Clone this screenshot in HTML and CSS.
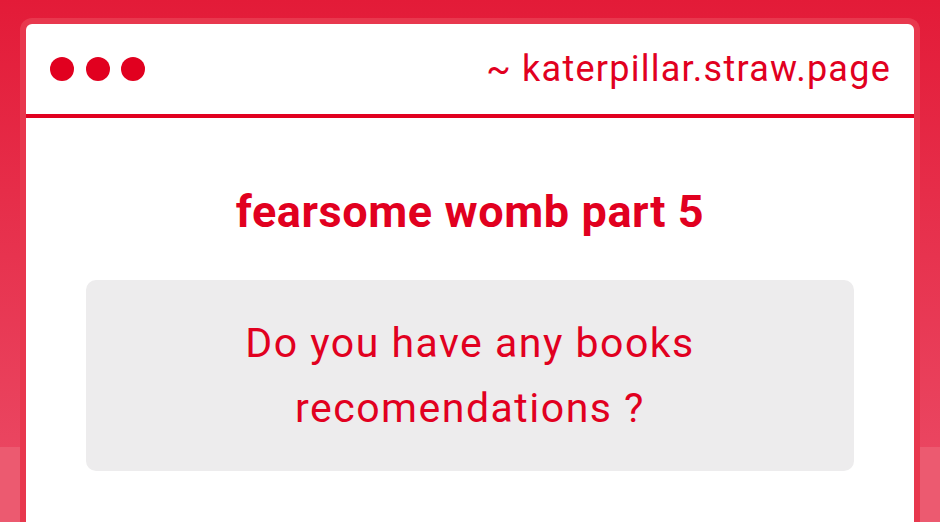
FILE: index.html
```html
<!DOCTYPE html>
<html lang="en">
<head>
  <meta charset="UTF-8">
  <meta name="viewport" content="width=device-width,initial-scale=1.0">
  <title>katerpillar.straw.page</title>
  <link rel="stylesheet" href="styles.css">
</head>
<body>
  <div class="window">
    <!-- title bar -->
    <header class="bar">
      <div class="dots">
        <span class="dot"></span>
        <span class="dot"></span>
        <span class="dot"></span>
      </div>
      <div class="url">~ katerpillar.straw.page</div>
    </header>

    <main class="content">
      <h1 class="asker">fearsome womb part 5</h1>
      <div class="question">
        Do you have any books<br>recomendations ?
      </div>
    </main>
  </div>
</body>
</html>
```

FILE: styles.css
```css
:root {
  --red: #e1001f;
  --frame: #e8384e;
  --box: #edeced;
}
html, body { height:100%; }
body {
  margin:0; overflow:hidden;
  font-family:Roboto,"Liberation Sans",sans-serif;
  background:linear-gradient(#e31b38, #ea4560 447px, #ec5a70 447px);
  padding:18px 20px 0;
  box-sizing:border-box;
}
.window {
  background:#fff;
  border:6px solid var(--frame);
  border-bottom:none;
  border-radius:12px 12px 0 0;
  height:100%;
  box-sizing:border-box;
  overflow:hidden;
}
.bar {
  height:90px;
  display:flex; align-items:center; justify-content:space-between;
  padding:0 24px;
  border-bottom:4px solid var(--red);
}
.dots { display:flex; gap:11.5px; }
.dot {
  width:24px; height:24px; border-radius:50%;
  background:var(--red);
}
.url {
  color:var(--red); font-size:36px; letter-spacing:1.25px;
  margin-right:-1px;
}
.content { padding:0 60px; }
.asker {
  margin:66px 0 40px; text-align:center;
  color:var(--red); font-size:45px; font-weight:700; line-height:56px;
  letter-spacing:0.6px;
}
.question {
  background:var(--box); border-radius:10px;
  color:var(--red); font-size:41px; line-height:65px;
  letter-spacing:1.5px;
  text-align:center; padding:31px 20px 30px;
}
```
